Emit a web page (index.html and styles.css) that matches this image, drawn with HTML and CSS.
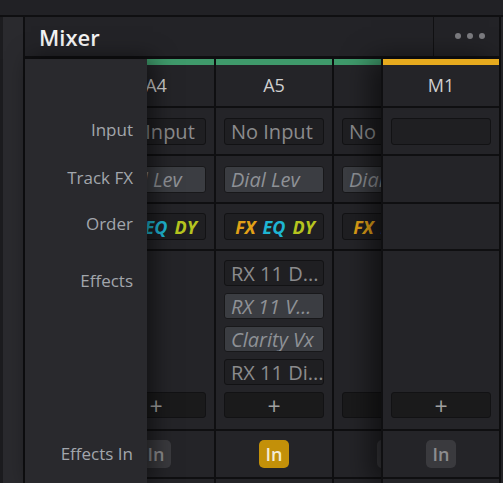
FILE: index.html
```html
<!DOCTYPE html>
<html>
<head>
<meta charset="utf-8">
<link rel="stylesheet" href="styles.css">
</head>
<body>
<div class="app">
  <div class="topbar"></div>
  <div class="main">
    <div class="sidebar"><div class="sidebar-edge"></div><div class="sidebar-fill"></div></div>
    <div class="panel">
      <div class="panel-header">
        <div class="title">Mixer</div>
        <div class="menu"><span class="dot"></span><span class="dot"></span><span class="dot"></span></div>
      </div>
      <div class="panel-body">
        <div class="labels">
          <div class="lrow lrow-top"></div>
          <div class="lrow lrow-std">Input</div>
          <div class="lrow lrow-std">Track FX</div>
          <div class="lrow lrow-order">Order</div>
          <div class="lrow lrow-effects">Effects</div>
          <div class="lrow lrow-in">Effects In</div>
        </div>
        <div class="scroller">
          <div class="strips">
            <div class="strip">
              <div class="colorbar green"></div>
              <div class="row row-name">A4</div>
              <div class="row row-input"><div class="box dark">No Input</div></div>
              <div class="row row-fx"><div class="box gray">Dial Lev</div></div>
              <div class="row row-order"><div class="box dark order"><span class="o-fx">FX</span><span class="o-eq">EQ</span><span class="o-dy">DY</span></div></div>
              <div class="row row-effects"><div class="slot plus">+</div></div>
              <div class="row row-in"><div class="inbtn off">In</div></div>
              <div class="row-rest"></div>
            </div>
            <div class="strip">
              <div class="colorbar green"></div>
              <div class="row row-name">A5</div>
              <div class="row row-input"><div class="box dark">No Input</div></div>
              <div class="row row-fx"><div class="box gray">Dial Lev</div></div>
              <div class="row row-order"><div class="box dark order"><span class="o-fx">FX</span><span class="o-eq">EQ</span><span class="o-dy">DY</span></div></div>
              <div class="row row-effects">
                <div class="slot dark">RX 11 D...</div>
                <div class="slot gray">RX 11 V...</div>
                <div class="slot gray">Clarity Vx</div>
                <div class="slot dark">RX 11 Di...</div>
                <div class="slot plus">+</div>
              </div>
              <div class="row row-in"><div class="inbtn on">In</div></div>
              <div class="row-rest"></div>
            </div>
            <div class="strip">
              <div class="colorbar green"></div>
              <div class="row row-name">A6</div>
              <div class="row row-input"><div class="box dark">No Input</div></div>
              <div class="row row-fx"><div class="box gray">Dial Lev</div></div>
              <div class="row row-order"><div class="box dark order"><span class="o-fx">FX</span><span class="o-eq">EQ</span><span class="o-dy">DY</span></div></div>
              <div class="row row-effects"><div class="slot plus">+</div></div>
              <div class="row row-in"><div class="inbtn off">In</div></div>
              <div class="row-rest"></div>
            </div>
          </div>
        </div>
        <div class="strip master">
          <div class="colorbar orange"></div>
          <div class="row row-name">M1</div>
          <div class="row row-input"><div class="box dark"></div></div>
          <div class="row row-fx"></div>
          <div class="row row-order"></div>
          <div class="row row-effects"><div class="slot plus">+</div></div>
          <div class="row row-in"><div class="inbtn off">In</div></div>
          <div class="row-rest"></div>
        </div>
      </div>
    </div>
  </div>
</div>
</body>
</html>
```

FILE: styles.css
```css
* { box-sizing: border-box; }
html, body { margin: 0; padding: 0; }
body {
  width: 503px;
  height: 483px;
  overflow: hidden;
  background: #26262a;
  font-family: "Open Sans", "Liberation Sans", sans-serif;
}
.app { display: flex; flex-direction: column; height: 483px; }
.topbar { height: 17px; flex: none; background: #212125; border-bottom: 2px solid #0f0f11; }
.main { flex: 1; display: flex; min-height: 0; }
.sidebar { width: 25px; flex: none; display: flex; border-right: 2px solid #0f0f11; }
.sidebar-edge { width: 3px; background: #1c1c1f; }
.sidebar-fill { flex: 1; background: #2a2a2e; }
.panel { width: 476px; flex: none; display: flex; flex-direction: column; border-right: 2px solid #0f0f11; }

.panel-header {
  height: 42px;
  flex: none;
  display: flex;
  background: #232327;
  border-bottom: 3px solid #0f0f11;
}
.title {
  flex: 1;
  display: flex;
  align-items: center;
  padding-left: 14px;
  color: #f4f4f4;
  font-size: 22px;
  font-weight: 600;
}
.menu {
  width: 66px;
  display: flex;
  align-items: center;
  justify-content: center;
  gap: 6px;
  border-left: 1px solid #111113;
  padding-left: 6px;
  padding-bottom: 2px;
}
.dot { width: 6px; height: 6px; border-radius: 50%; background: #7c7c80; }

.panel-body { flex: 1; display: flex; min-height: 0; }

.labels {
  width: 122px;
  flex: none;
  position: relative;
  z-index: 2;
  background: #29292d;
  box-shadow: 6px 0 22px rgba(0, 0, 0, 0.55);
  display: flex;
  flex-direction: column;
  color: #a2a6ac;
  font-size: 17px;
}
.lrow { display: flex; justify-content: flex-end; padding-right: 14px; flex: none; }
.lrow-top { height: 49px; }
.lrow-std { height: 48px; align-items: center; padding-bottom: 6px; }
.lrow-order { height: 47px; align-items: center; padding-bottom: 8px; }
.lrow-effects { height: 180px; align-items: flex-start; padding-top: 18px; }
.lrow-in { height: 48px; align-items: center; padding-bottom: 4px; }

.scroller { width: 234px; flex: none; overflow: hidden; background: #0f0f11; }
.strips { display: flex; gap: 2px; margin-left: -49px; height: 100%; }

.strip {
  width: 116px;
  flex: none;
  display: flex;
  flex-direction: column;
  background: #242428;
}
.strip.master {
  width: 118px;
  border-left: 2px solid #0f0f11;
  position: relative;
  z-index: 2;
  box-shadow: -10px 0 26px rgba(0, 0, 0, 0.55);
}
.colorbar { height: 6px; flex: none; }
.colorbar.green { background: #3f9a6b; }
.colorbar.orange { background: #e6aa1e; }

.row {
  flex: none;
  border-bottom: 2px solid #0f0f11;
  display: flex;
  align-items: center;
  justify-content: center;
}
.row-name { height: 43px; color: #cfcfcf; font-size: 18px; padding-bottom: 1px; }
.row-input { height: 48px; }
.row-fx { height: 48px; }
.row-order { height: 47px; }
.row-effects {
  height: 180px;
  flex-direction: column;
  justify-content: flex-end;
  gap: 7px;
  padding-bottom: 11px;
}
.row-in { height: 48px; }
.row-rest { flex: 1; }

.box, .slot {
  width: 100px;
  border: 1px solid #121214;
  border-radius: 3px;
  font-size: 20px;
  white-space: nowrap;
  overflow: hidden;
  display: flex;
  align-items: center;
  padding-left: 6px;
}
.box { height: 27px; }
.slot { height: 26px; flex: none; }
.dark { background: #1f1f22; color: #8b8b8d; }
.gray { background: #3b3d42; color: #8e9196; font-style: italic; border-color: #18181a; }
.plus {
  background: #1a1a1b;
  color: #a0a0a0;
  justify-content: center;
  padding-left: 0;
  padding-top: 2px;
  font-size: 23px;
  font-weight: 400;
}

.order {
  font-weight: 700;
  font-style: italic;
  font-size: 18px;
  justify-content: center;
  gap: 7px;
  padding-left: 2px;
}
.o-fx { color: #e2a117; }
.o-eq { color: #1eb5d3; }
.o-dy { color: #b6c41f; }

.inbtn {
  width: 30px;
  height: 28px;
  border-radius: 5px;
  display: flex;
  align-items: center;
  justify-content: center;
  font-size: 18px;
  font-weight: 600;
}
.inbtn.on { background: #c39009; color: #f4ebd3; }
.inbtn.off { background: #3a3a3e; color: #8c8c8e; }
```
